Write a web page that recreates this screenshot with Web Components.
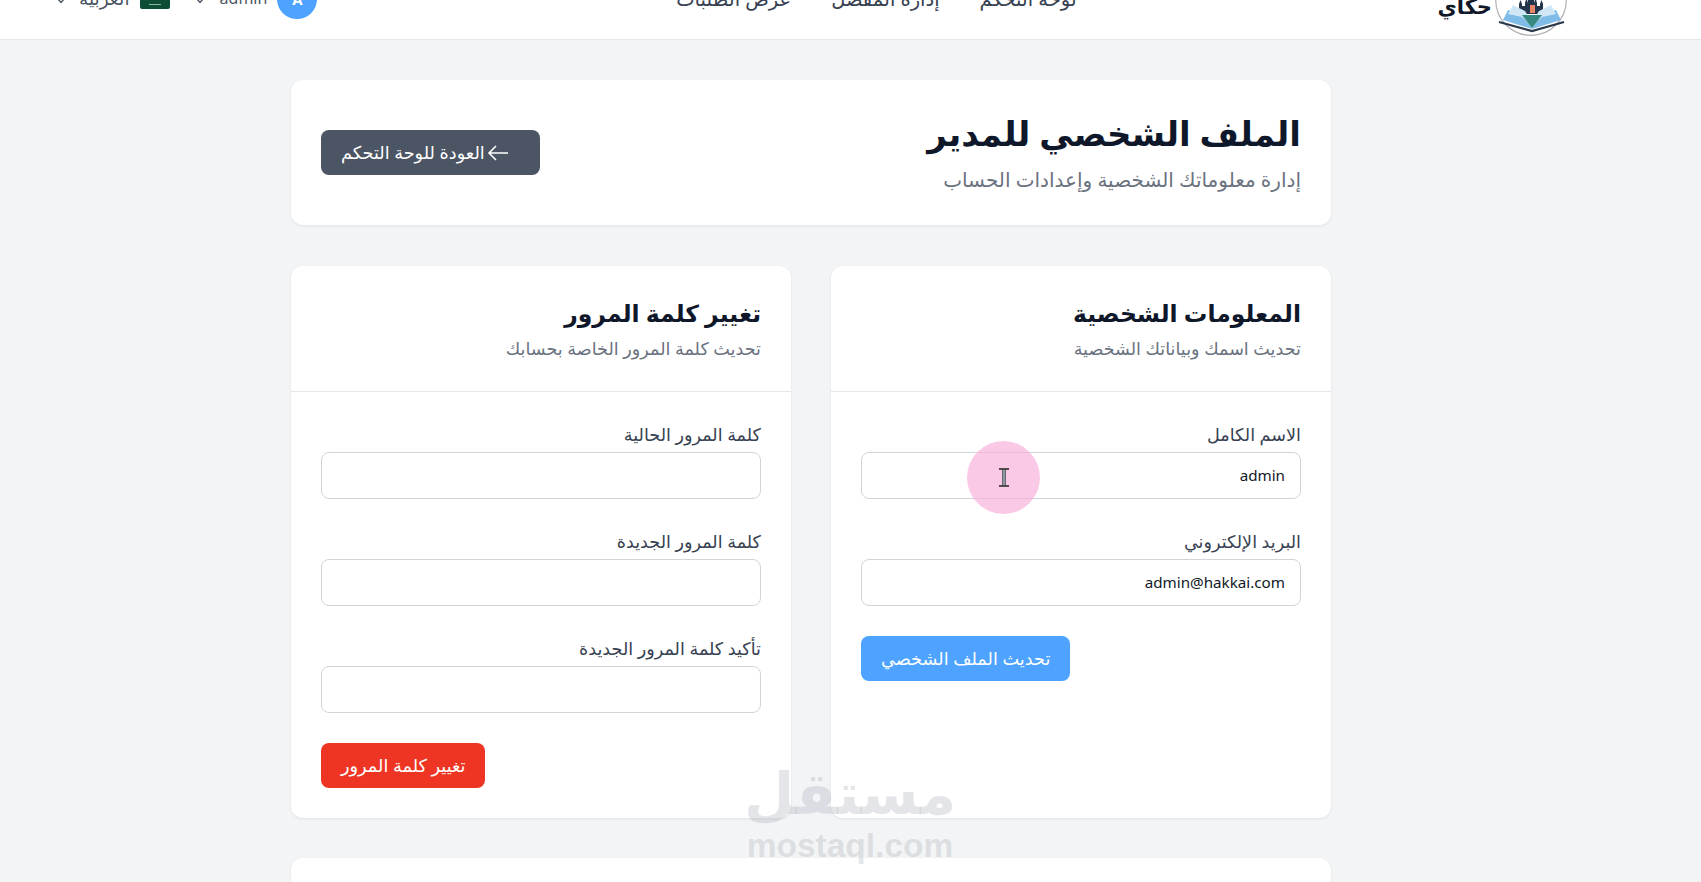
<!DOCTYPE html>
<html lang="ar" dir="rtl">
<head>
<meta charset="utf-8">
<title>الملف الشخصي للمدير</title>
<style>
  html, body { margin: 0; height: 882px; overflow: hidden; }
  body {
    background: #f3f4f6;
    font-family: "Noto Sans", "DejaVu Sans", sans-serif;
    color: #111827;
    position: relative;
  }
  main { display: block; margin: 40px 370px 0 291px; }
  .two { display: grid; grid-template-columns: 500px 500px; gap: 40px; margin-top: 41px; }
  ui-button.submit { display: flex; width: fit-content; margin-right: auto; }
</style>
</head>
<body>
<site-header></site-header>
<main>
  <hero-card heading="الملف الشخصي للمدير" sub="إدارة معلوماتك الشخصية وإعدادات الحساب">
    <ui-button color="#4b5563" arrow>العودة للوحة التحكم</ui-button>
  </hero-card>
  <div class="two">
    <form-card heading="المعلومات الشخصية" sub="تحديث اسمك وبياناتك الشخصية">
      <form-field label="الاسم الكامل">admin</form-field>
      <form-field label="البريد الإلكتروني">admin@hakkai.com</form-field>
      <ui-button color="#4da3ff" class="submit">تحديث الملف الشخصي</ui-button>
    </form-card>
    <form-card heading="تغيير كلمة المرور" sub="تحديث كلمة المرور الخاصة بحسابك">
      <form-field label="كلمة المرور الحالية"></form-field>
      <form-field label="كلمة المرور الجديدة"></form-field>
      <form-field label="تأكيد كلمة المرور الجديدة"></form-field>
      <ui-button color="#ee3524" class="submit">تغيير كلمة المرور</ui-button>
    </form-card>
  </div>
  <form-card style="margin-top:40px"></form-card>
</main>
<cursor-mark></cursor-mark>
<site-watermark></site-watermark>

<script>
// Top bar, scrolled so only its lower part shows
class SiteHeader extends HTMLElement {
  constructor() {
    super();
    const shadow = this.attachShadow({ mode: 'open' });
    shadow.innerHTML = `
      <style>
        :host { display: block; height: 40px; background: #fff; border-bottom: 1px solid #e5e7eb; box-sizing: border-box; overflow: hidden; }
        .bar { height: 39px; display: flex; align-items: flex-end; justify-content: space-between; padding: 0 134px 0 57px; }
        .brand { display: flex; align-items: flex-end; gap: 3px; }
        .brand svg { display: block; margin-bottom: 3px; }
        .brand b { font-size: 21px; line-height: 30px; margin-bottom: 18px; color: #111827; }
        nav { display: flex; gap: 40px; font-size: 19.5px; line-height: 24px; color: #374151; margin-bottom: 28px; margin-right: 2px; }
        .user { display: flex; align-items: flex-end; font-size: 16px; color: #4b5563; }
        .avatar { width: 40px; height: 40px; border-radius: 50%; background: #4da3ff; color: #fff; font-weight: 700; font-size: 15px; display: flex; align-items: center; justify-content: center; margin-bottom: 20px; flex: none; }
        .item { display: flex; align-items: center; line-height: 22px; margin-bottom: 30px; }
        .ar { font-size: 18.5px; }
        .flag { width: 30px; height: 20px; background: #0b4d35; border-radius: 2px; margin-bottom: 30px; display: flex; align-items: flex-end; justify-content: center; flex: none; }
        .flag i { display: block; width: 12px; border-top: 1px solid #8fb5a6; margin-bottom: 4px; }
        svg.chev { flex: none; }
      </style>
      <div class="bar">
        <div class="brand">
          <svg width="72" height="72" viewBox="0 0 72 72">
            <circle cx="36" cy="36" r="35.3" fill="#fff" stroke="#b0b0b4" stroke-width="1.2"/>
            <path d="M24 50V40l1.5-4 1.5 4v2h3v-3l1.5-5 1.5 5v-5l3-4 3 4v5l1.5-5 1.5 5v3h3v-2l1.5-4 1.5 4v10z" fill="#24364c"/>
            <rect x="35" y="41" width="5" height="8" fill="#e9866a"/>
            <path d="M8 56L13 46L27 50L37 64L47 50L61 46L66 56L37 65z" fill="#7fbce8"/>
            <path d="M13 50L18 41L30 47L37 58L44 47L56 41L61 50L47 53L37 62L27 53z" fill="#cfe6f7"/>
            <path d="M27 51H47L37 64z" fill="#37897f"/>
            <path d="M4 58L37 67L69 58" fill="none" stroke="#2b3a4a" stroke-width="2.2"/>
          </svg>
          <b>حكاي</b>
        </div>
        <nav><span>لوحة التحكم</span><span>إدارة المفصل</span><span>عرض الطلبات</span></nav>
        <div class="user">
          <div class="avatar">A</div>
          <div class="item" style="margin-right:10px">admin</div>
          <svg class="chev" width="8" height="6" viewBox="0 0 8 6" style="margin:0 16px 35px 0"><path d="M1 1l3 3.5L7 1" fill="none" stroke="#4b5563" stroke-width="1.4"/></svg>
          <div class="flag" style="margin-right:26px"><i></i></div>
          <div class="item ar" style="margin-right:10px">العربية</div>
          <svg class="chev" width="8" height="6" viewBox="0 0 8 6" style="margin:0 14px 35px 0"><path d="M1 1l3 3.5L7 1" fill="none" stroke="#4b5563" stroke-width="1.4"/></svg>
        </div>
      </div>`;
  }
}

class UiButton extends HTMLElement {
  constructor() {
    super();
    const shadow = this.attachShadow({ mode: 'open' });
    shadow.innerHTML = `
      <style>
        :host { display: inline-flex; align-items: center; height: 45px; box-sizing: border-box; padding: 0 20px 2px; border-radius: 8px; color: #fff; font-size: 17.7px; font-weight: 500; white-space: nowrap; }
        svg { display: none; flex: none; margin: 2px 11px 0 2px; }
        :host([arrow]) svg { display: block; }
      </style>
      <svg width="22" height="18" viewBox="0 0 22 18"><path d="M21 9H2M9 2L2 9l7 7" fill="none" stroke="#fff" stroke-width="1.6"/></svg>
      <slot></slot>`;
  }
  connectedCallback() {
    this.style.background = this.getAttribute('color');
  }
}

class HeroCard extends HTMLElement {
  constructor() {
    super();
    const shadow = this.attachShadow({ mode: 'open' });
    shadow.innerHTML = `
      <style>
        :host { display: flex; align-items: center; justify-content: space-between; height: 145px; box-sizing: border-box; margin-top: 40px; padding: 0 30px; background: #fff; border-radius: 12px; box-shadow: 0 1px 3px rgba(0,0,0,.08); }
        h1 { margin: 0 0 14px; font-size: 34px; line-height: 40px; font-weight: 700; color: #0f172a; }
        p { margin: 0; font-size: 20px; line-height: 26px; color: #6b7280; }
      </style>
      <div class="text"><h1></h1><p></p></div>
      <slot></slot>`;
  }
  connectedCallback() {
    this.shadowRoot.querySelector('h1').textContent = this.getAttribute('heading');
    this.shadowRoot.querySelector('p').textContent = this.getAttribute('sub');
  }
}

class FormCard extends HTMLElement {
  constructor() {
    super();
    const shadow = this.attachShadow({ mode: 'open' });
    shadow.innerHTML = `
      <style>
        :host { display: block; background: #fff; border-radius: 12px; box-shadow: 0 1px 3px rgba(0,0,0,.08); }
        header { height: 126px; box-sizing: border-box; padding: 29px 30px 0; border-bottom: 1px solid #e5e7eb; }
        h2 { margin: 0 0 5px; font-size: 23.5px; line-height: 36px; font-weight: 700; color: #0f172a; }
        p { margin: 0; font-size: 17.6px; line-height: 24px; color: #6b7280; }
        .body { padding: 30px; min-height: 200px; }
      </style>
      <header><h2></h2><p></p></header>
      <div class="body"><slot></slot></div>`;
  }
  connectedCallback() {
    this.shadowRoot.querySelector('h2').textContent = this.getAttribute('heading') || '';
    this.shadowRoot.querySelector('p').textContent = this.getAttribute('sub') || '';
  }
}

class FormField extends HTMLElement {
  constructor() {
    super();
    const shadow = this.attachShadow({ mode: 'open' });
    shadow.innerHTML = `
      <style>
        :host { display: block; margin-bottom: 30px; }
        label { display: block; font-size: 17.6px; line-height: 24px; margin-bottom: 6px; color: #374151; font-weight: 500; }
        .box { height: 47px; box-sizing: border-box; border: 1px solid #d1d5db; border-radius: 8px; background: #fff; padding: 0 15px 2px; display: flex; align-items: center; font-size: 15.2px; color: #111827; direction: rtl; }
      </style>
      <label></label>
      <div class="box"><slot></slot></div>`;
  }
  connectedCallback() {
    this.shadowRoot.querySelector('label').textContent = this.getAttribute('label');
  }
}

class CursorMark extends HTMLElement {
  constructor() {
    super();
    const shadow = this.attachShadow({ mode: 'open' });
    shadow.innerHTML = `
      <style>
        :host { position: absolute; left: 967px; top: 441px; width: 73px; height: 73px; border-radius: 50%; background: rgba(247,175,216,.68); display: flex; align-items: center; justify-content: center; }
      </style>
      <svg width="12" height="19" viewBox="0 0 12 19"><path d="M1 1h10M1 18h10" stroke="#222" stroke-width="1.6"/><rect x="4.5" y="1.5" width="3" height="16" fill="#8b9aa0" stroke="#333" stroke-width=".6"/></svg>`;
  }
}

class SiteWatermark extends HTMLElement {
  constructor() {
    super();
    const shadow = this.attachShadow({ mode: 'open' });
    shadow.innerHTML = `
      <style>
        :host { position: absolute; left: 738px; top: 760px; width: 224px; text-align: center; color: rgba(170,175,185,.32); pointer-events: none; }
        .ar { font-family: "DejaVu Sans", sans-serif; font-weight: 700; font-size: 58px; line-height: 68px; height: 68px; }
        .en { font-family: "Liberation Sans", sans-serif; font-weight: 700; font-size: 33.5px; line-height: 36px; direction: ltr; }
      </style>
      <div class="ar">مستقل</div>
      <div class="en">mostaql.com</div>`;
  }
}

customElements.define('site-header', SiteHeader);
customElements.define('ui-button', UiButton);
customElements.define('hero-card', HeroCard);
customElements.define('form-card', FormCard);
customElements.define('form-field', FormField);
customElements.define('cursor-mark', CursorMark);
customElements.define('site-watermark', SiteWatermark);
</script>
</body>
</html>
